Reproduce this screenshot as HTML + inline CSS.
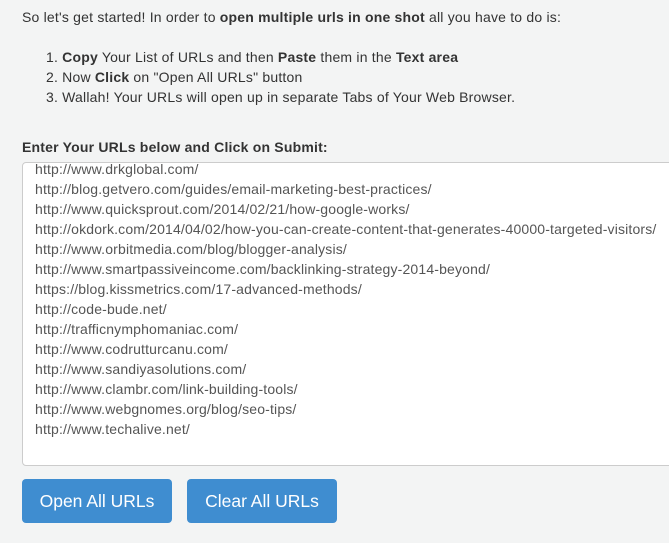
<!DOCTYPE html>
<html><head><style>
body{margin:0;background:#f3f4f4;font-family:"Liberation Sans",sans-serif;font-size:14px;color:#333;width:669px;height:543px;overflow:hidden;position:relative;letter-spacing:0.2px}
.a{position:absolute;white-space:nowrap;line-height:20px}
b{font-weight:bold}
.ta{position:absolute;left:22px;top:162px;width:660px;height:302px;background:#fff;border:1px solid #ccc;border-radius:4px;overflow:hidden}
.ta div{position:absolute;left:12px;line-height:20px;color:#555;white-space:nowrap;letter-spacing:0.16px}
.btn{position:absolute;top:479px;height:44px;background:#3f8dd0;color:#fff;border-radius:4px;font-size:17.5px;line-height:44px;text-align:center;letter-spacing:0}
</style></head><body>
<div class="a" style="left:22px;top:7px">So let's get started! In order to <b>open multiple urls in one shot</b> all you have to do is:</div>
<div class="a" style="left:46px;top:47px">1. <b>Copy</b> Your List of URLs and then <b>Paste</b> them in the <b>Text area</b></div>
<div class="a" style="left:46px;top:67px">2. Now <b>Click</b> on "Open All URLs" button</div>
<div class="a" style="left:46px;top:87px">3. Wallah! Your URLs will open up in separate Tabs of Your Web Browser.</div>
<div class="a" style="left:22px;top:137px"><b>Enter Your URLs below and Click on Submit:</b></div>
<div class="ta"><div style="top:-4px">http://www.drkglobal.com/<br>http://blog.getvero.com/guides/email-marketing-best-practices/<br>http://www.quicksprout.com/2014/02/21/how-google-works/<br>http://okdork.com/2014/04/02/how-you-can-create-content-that-generates-40000-targeted-visitors/<br>http://www.orbitmedia.com/blog/blogger-analysis/<br>http://www.smartpassiveincome.com/backlinking-strategy-2014-beyond/<br>https://blog.kissmetrics.com/17-advanced-methods/<br>http://code-bude.net/<br>http://trafficnymphomaniac.com/<br>http://www.codrutturcanu.com/<br>http://www.sandiyasolutions.com/<br>http://www.clambr.com/link-building-tools/<br>http://www.webgnomes.org/blog/seo-tips/<br>http://www.techalive.net/</div></div>
<div class="btn" style="left:22px;width:150px">Open All URLs</div>
<div class="btn" style="left:187px;width:150px">Clear All URLs</div>
</body></html>
